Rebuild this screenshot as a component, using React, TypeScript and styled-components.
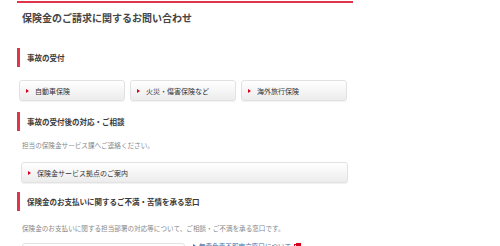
import React from 'react';
import styled, { createGlobalStyle } from 'styled-components';

const Global = createGlobalStyle`
  html, body {
    margin: 0;
    padding: 0;
    background: #fff;
  }
  body {
    font-family: "Noto Sans CJK JP", "Noto Sans", sans-serif;
    color: #333;
  }
`;

const red = '#e0354b';

const Page = styled.div`
  width: 336px;
  padding-left: 17px;
  height: 246px;
  overflow: hidden;
`;

const TopRule = styled.div`
  height: 2px;
  margin-top: 1px;
  background: ${red};
`;

const Title = styled.h1`
  margin: 8px 0 0 5px;
  font-size: 10px;
  line-height: 14px;
  font-weight: 700;
  color: #444;
`;

const Heading = styled.h2<{ $top: number }>`
  margin: ${p => p.$top}px 0 0;
  height: 19px;
  display: flex;
  align-items: center;
  border-left: 3px solid ${red};
  padding-left: 7px;
  font-size: 7.5px;
  font-weight: 700;
  color: #3a3a3a;
`;

const ButtonRow = styled.div`
  display: flex;
  gap: 5px;
  margin: 13px 0 0 2px;
`;

const LinkButton = styled.a<{ $wide?: boolean }>`
  box-sizing: border-box;
  display: flex;
  align-items: center;
  gap: 6px;
  width: ${p => (p.$wide ? '327px' : '106px')};
  height: 21px;
  padding-left: 6px;
  border: 1px solid #e2e2e2;
  border-radius: 3px;
  background: linear-gradient(#ffffff, #ececec);
  box-shadow: 0 1px 1px rgba(0, 0, 0, 0.06);
  font-size: 7px;
  color: #333;
  text-decoration: none;
`;

const Arrow = styled.span`
  width: 0;
  height: 0;
  border-top: 2.5px solid transparent;
  border-bottom: 2.5px solid transparent;
  border-left: 3px solid #d7001b;
  flex: none;
`;

const Text = styled.p<{ $top: number }>`
  margin: ${p => p.$top}px 0 0 5px;
  font-size: 6.6px;
  line-height: 10px;
  color: #888;
`;

const WideWrap = styled.div`
  margin: 12px 0 0 4px;
`;

const BottomRow = styled.div`
  display: flex;
  align-items: flex-start;
  gap: 8px;
  margin: 10px 0 0 5px;
`;

const Box = styled.div`
  width: 163px;
  height: 20px;
  box-sizing: border-box;
  border: 1px solid #e2e2e2;
  border-radius: 3px;
`;

const TextLink = styled.a`
  display: flex;
  align-items: center;
  gap: 3px;
  margin-top: -2px;
  font-size: 6.6px;
  line-height: 10px;
  color: #4a6fa5;
  text-decoration: none;
`;

const SmallArrow = styled.span`
  width: 0;
  height: 0;
  border-top: 2px solid transparent;
  border-bottom: 2px solid transparent;
  border-left: 3px solid #4a6fa5;
`;

const External = () => (
  <svg width="7" height="7" viewBox="0 0 7 7">
    <rect x="0.5" y="1.5" width="5" height="5" fill="none" stroke="#d7001b" />
    <rect x="2" y="0" width="5" height="4" fill="#d7001b" />
  </svg>
);

export default function App() {
  return (
    <Page>
      <Global />
      <TopRule />
      <Title>保険金のご請求に関するお問い合わせ</Title>

      <Heading $top={23}>事故の受付</Heading>
      <ButtonRow>
        <LinkButton><Arrow />自動車保険</LinkButton>
        <LinkButton><Arrow />火災・傷害保険など</LinkButton>
        <LinkButton><Arrow />海外旅行保険</LinkButton>
      </ButtonRow>

      <Heading $top={11}>事故の受付後の対応・ご相談</Heading>
      <Text $top={9}>担当の保険金サービス課へご連絡ください。</Text>
      <WideWrap>
        <LinkButton $wide><Arrow />保険金サービス拠点のご案内</LinkButton>
      </WideWrap>

      <Heading $top={9}>保険金のお支払いに関するご不満・苦情を承る窓口</Heading>
      <Text $top={12}>保険金のお支払いに関する担当部署の対応等について、ご相談・ご不満を承る窓口です。</Text>
      <BottomRow>
        <Box />
        <TextLink><SmallArrow />無責免責不服申立窓口について<External /></TextLink>
      </BottomRow>
    </Page>
  );
}
